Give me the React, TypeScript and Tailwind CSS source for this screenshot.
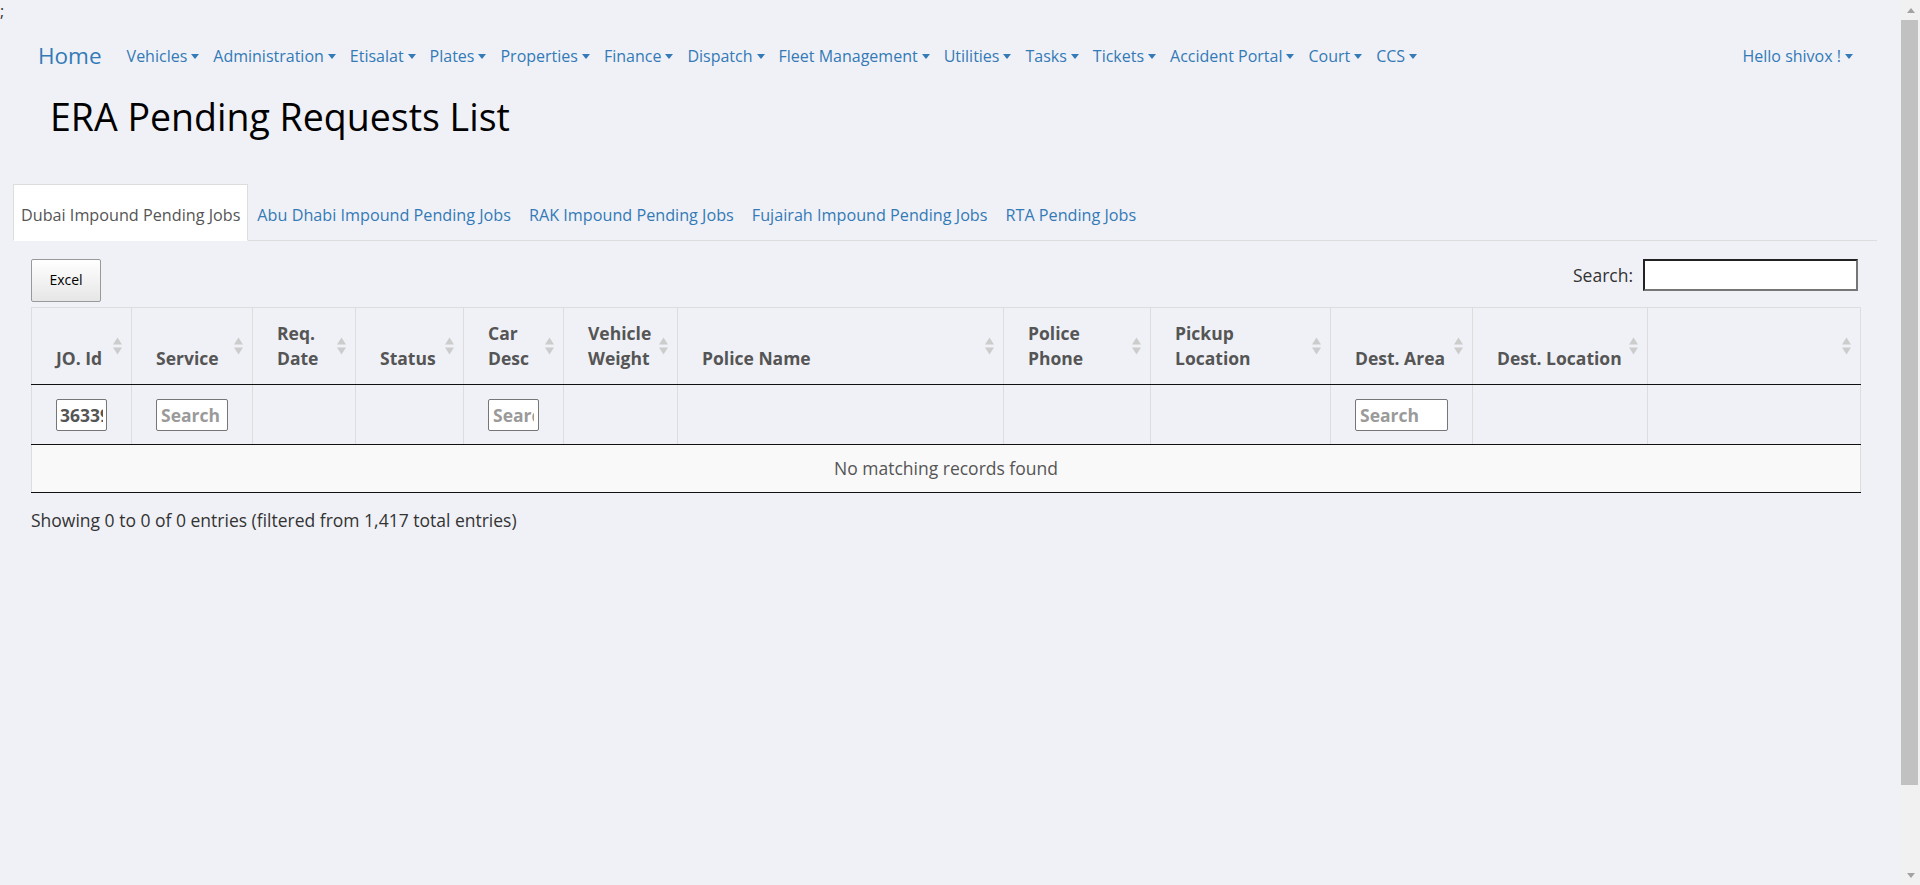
import React from "react"

const NAV = [
    "Vehicles",
    "Administration",
    "Etisalat",
    "Plates",
    "Properties",
    "Finance",
    "Dispatch",
    "Fleet Management",
    "Utilities",
    "Tasks",
    "Tickets",
    "Accident Portal",
    "Court",
    "CCS",
]

const TABS = [
    "Dubai Impound Pending Jobs",
    "Abu Dhabi Impound Pending Jobs",
    "RAK Impound Pending Jobs",
    "Fujairah Impound Pending Jobs",
    "RTA Pending Jobs",
]

type Col = { w: string; label: string[]; filter?: "value" | "search" }

const COLS: Col[] = [
    { w: "w-[100px]", label: ["JO. Id"], filter: "value" },
    { w: "w-[121px]", label: ["Service"], filter: "search" },
    { w: "w-[103px]", label: ["Req.", "Date"] },
    { w: "w-[108px]", label: ["Status"] },
    { w: "w-[100px]", label: ["Car", "Desc"], filter: "search" },
    { w: "w-[114px]", label: ["Vehicle", "Weight"] },
    { w: "w-[326px]", label: ["Police Name"] },
    { w: "w-[147px]", label: ["Police", "Phone"] },
    { w: "w-[180px]", label: ["Pickup", "Location"] },
    { w: "w-[142px]", label: ["Dest. Area"], filter: "search" },
    { w: "w-[175px]", label: ["Dest. Location"] },
    { w: "w-[213px]", label: [] },
]

function Caret() {
    return (
        <span className="ml-[4px] inline-block h-0 w-0 border-x-[4px] border-t-[5px] border-x-transparent border-t-[#337ab7]" />
    )
}

function SortIcon() {
    return (
        <svg
            width="11"
            height="19"
            viewBox="0 0 11 19"
            className="absolute right-[8px] top-1/2 -translate-y-1/2"
        >
            <path d="M1 8 L5.5 1 L10 8 Z" fill="#cccccc" />
            <path d="M1 11 L5.5 18 L10 11 Z" fill="#cccccc" />
        </svg>
    )
}

function Scrollbar() {
    return (
        <div className="flex w-[19px] shrink-0 flex-col bg-[#f1f1f1]">
            <div className="flex h-[20px] items-center justify-center">
                <span className="inline-block h-0 w-0 border-x-[4px] border-b-[5px] border-x-transparent border-b-[#a3a3a3]" />
            </div>
            <div className="mr-[2px] h-[765px] bg-[#c1c1c1]" />
            <div className="flex-1" />
            <div className="flex h-[20px] items-center justify-center">
                <span className="inline-block h-0 w-0 border-x-[4px] border-t-[5px] border-x-transparent border-t-[#a3a3a3]" />
            </div>
        </div>
    )
}

export default function App() {
    return (
        <div className="flex h-[885px] overflow-hidden bg-[#f0f1f6] font-['Open_Sans',sans-serif] text-[#333]">
            <div className="min-w-0 flex-1">
                <div className="h-[22px] text-[16px] leading-[22px] text-[#333]">;</div>

                {/* top navigation */}
                <nav className="flex h-[68px] items-center justify-between pl-[38px] pr-[48px]">
                    <div className="flex items-center">
                        <a className="mr-[18px] text-[22.5px] leading-[30px] text-[#337ab7]">Home</a>
                        {NAV.map((item) => (
                            <a
                                key={item}
                                className="flex items-center px-[7px] text-[16px] leading-[22px] text-[#337ab7]"
                            >
                                {item}
                                <Caret />
                            </a>
                        ))}
                    </div>
                    <a className="flex items-center text-[16px] leading-[22px] text-[#337ab7]">
                        Hello shivox !
                        <Caret />
                    </a>
                </nav>

                <h1 className="ml-[50px] mt-[4px] text-[37.5px] font-normal leading-[45px] text-black">
                    ERA Pending Requests List
                </h1>

                <div className="ml-[13px] mr-[24px] mt-[45px]">
                    <ul className="flex border-b border-[#ddd]">
                        {TABS.map((tab, i) => (
                            <li key={tab} className="-mb-px">
                                <a
                                    className={
                                        i === 0
                                            ? "block border border-[#ddd] border-b-white bg-white px-[7px] pb-[13px] pt-[18px] text-[16.2px] leading-[24px] text-[#555]"
                                            : "block border border-transparent px-[8px] pb-[13px] pt-[18px] text-[16.2px] leading-[24px] text-[#337ab7]"
                                    }
                                >
                                    {tab}
                                </a>
                            </li>
                        ))}
                    </ul>

                    <div className="pl-[18px] pr-[17px] pt-[18px]">
                        <div className="flex items-start justify-between">
                            <button className="h-[43px] w-[70px] rounded-[2px] border border-[#999] bg-linear-to-b from-white to-[#e6e6e6] pb-[2px] text-[14px] text-black">
                                Excel
                            </button>
                            <label className="mr-[2px] flex items-center gap-[10px] text-[17.5px] text-[#333]">
                                Search:
                                <input className="h-[32px] w-[215px] border-2 border-b-[#767676] border-l-[#222] border-r-[#767676] border-t-[#222] bg-white px-[4px] outline-none" />
                            </label>
                        </div>

                        <table className="mt-[5px] w-full table-fixed border-collapse">
                            <colgroup>
                                {COLS.map((c, i) => (
                                    <col key={i} className={c.w} />
                                ))}
                            </colgroup>
                            <thead>
                                <tr>
                                    {COLS.map((c, i) => (
                                        <th
                                            key={i}
                                            className="relative h-[77px] whitespace-nowrap border border-[#ddd] border-b-[#111] pb-[13px] pl-[24px] pr-[24px] text-left align-bottom text-[17.5px] font-bold leading-[25px] text-[#555]"
                                        >
                                            {c.label.map((l, j) => (
                                                <React.Fragment key={j}>
                                                    {j > 0 && <br />}
                                                    {l}
                                                </React.Fragment>
                                            ))}
                                            <SortIcon />
                                        </th>
                                    ))}
                                </tr>
                            </thead>
                            <tbody>
                                <tr>
                                    {COLS.map((c, i) => (
                                        <td
                                            key={i}
                                            className="h-[60px] border-x border-b border-x-[#ddd] border-b-[#111] px-[24px] align-middle"
                                        >
                                            {c.filter === "value" && (
                                                <input
                                                    readOnly
                                                    value="363394"
                                                    className="block h-[32px] w-full rounded-[2px] border border-[#767676] bg-white px-[3px] text-[17.5px] font-bold text-[#555] outline-none"
                                                />
                                            )}
                                            {c.filter === "search" && (
                                                <input
                                                    placeholder="Search"
                                                    className="block h-[32px] w-full rounded-[2px] border border-[#767676] bg-white px-[4px] text-[17.5px] font-bold text-[#555] outline-none placeholder:text-[#9a9a9a]"
                                                />
                                            )}
                                        </td>
                                    ))}
                                </tr>
                                <tr>
                                    <td
                                        colSpan={12}
                                        className="h-[48px] border-x border-b border-x-[#ddd] border-b-[#111] bg-[#f9f9f9] text-center align-middle text-[17.5px] text-[#555]"
                                    >
                                        No matching records found
                                    </td>
                                </tr>
                            </tbody>
                        </table>

                        <div className="mt-[15px] text-[17.5px] leading-[24px] text-[#333]">
                            Showing 0 to 0 of 0 entries (filtered from 1,417 total entries)
                        </div>
                    </div>
                </div>
            </div>
            <Scrollbar />
        </div>
    )
}
